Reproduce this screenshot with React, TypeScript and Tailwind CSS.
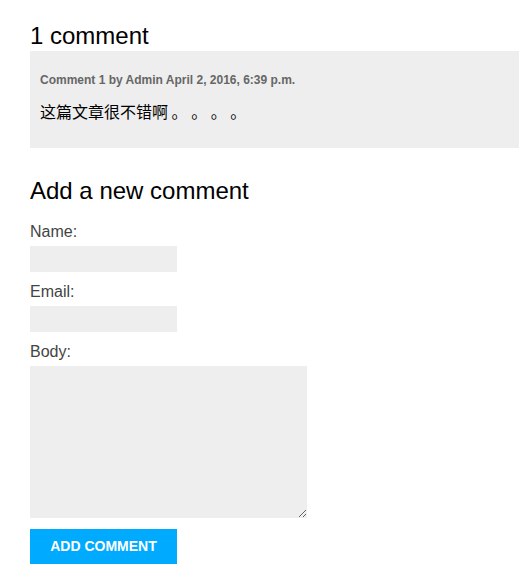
import React from "react";

const cjk = '"Noto Sans CJK SC", "Noto Sans CJK TC", sans-serif';

export default function App() {
  return (
    <div
      className="min-h-[571px] bg-white pl-[30px] pt-[21px] text-[#444]"
      style={{ fontFamily: '"Liberation Sans", Arial, "Noto Sans CJK SC", sans-serif' }}
    >
      <h2 className="text-[24px] leading-[30px] text-black">1 comment</h2>
      <div className="bg-[#eeeeee] h-[97px] pl-[10px] pt-[21px]">
        <div className="text-[12px] font-bold leading-[16px] text-[#666]">
          Comment 1 by Admin April 2, 2016, 6:39 p.m.
        </div>
        <p className="mt-[11px] text-[16px] leading-[24px] text-black" style={{ fontFamily: cjk }}>
          这篇文章很不错
          <span style={{ fontFamily: '"Noto Sans CJK TC", "Noto Sans CJK JP", sans-serif' }}>啊</span>
          {" 。 。 。 。"}
        </p>
      </div>

      <h2 className="mt-[28px] text-[24px] leading-[30px] text-black">Add a new comment</h2>
      <form className="mt-[16px] flex flex-col">
        <label className="text-[16px] leading-[20px]">Name:</label>
        <input className="mt-[4px] h-[26px] w-[147px] bg-[#eeeeee] outline-none" />
        <label className="mt-[10px] text-[16px] leading-[20px]">Email:</label>
        <input className="mt-[4px] h-[26px] w-[147px] bg-[#eeeeee] outline-none" />
        <label className="mt-[10px] text-[16px] leading-[20px]">Body:</label>
        <textarea className="mt-[4px] h-[152px] w-[277px] bg-[#eeeeee] outline-none" />
        <button
          type="button"
          className="mt-[11px] h-[35px] w-[147px] bg-[#00aaff] text-[14px] font-bold text-white"
        >
          ADD COMMENT
        </button>
      </form>
    </div>
  );
}
